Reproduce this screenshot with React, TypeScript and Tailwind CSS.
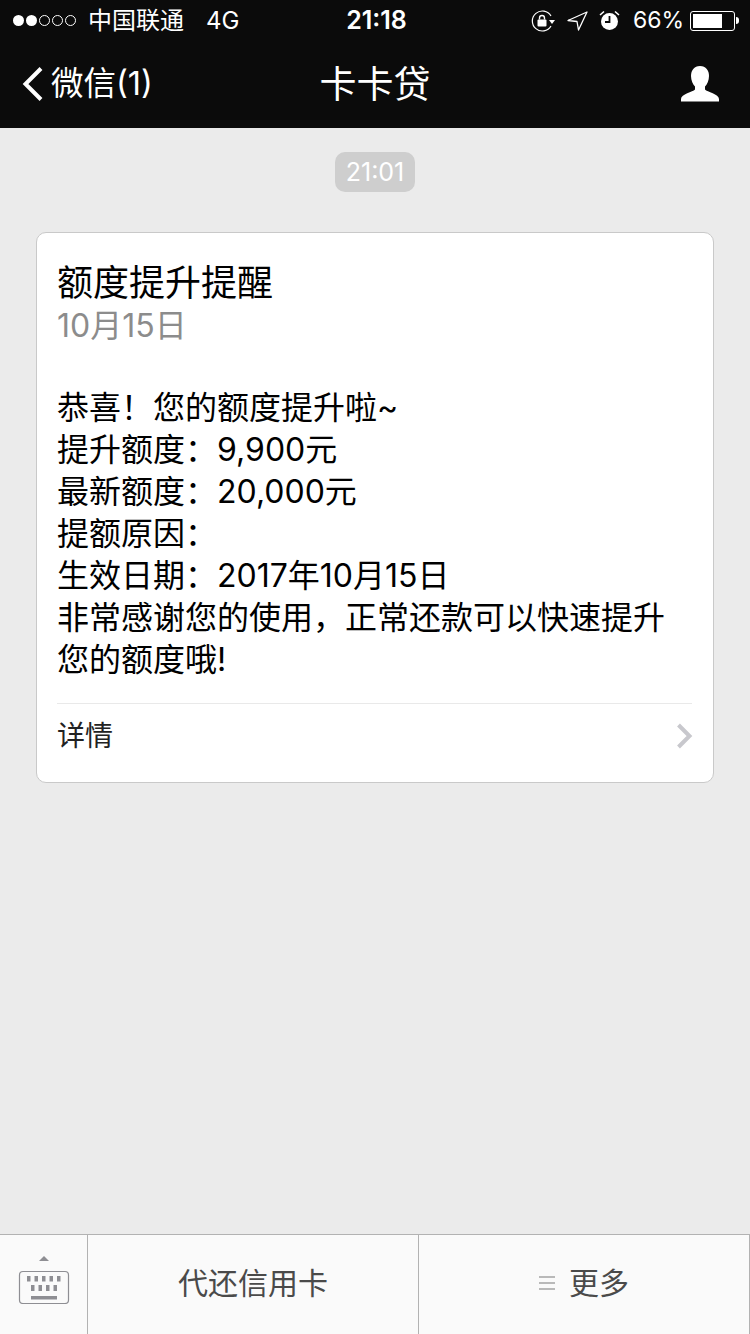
import React from "react";

const CJK = "font-['Inter','Noto_Sans_CJK_SC',sans-serif]";

const bodyLines = [
  "恭喜！您的额度提升啦~",
  "提升额度：9,900元",
  "最新额度：20,000元",
  "提额原因：",
  "生效日期：2017年10月15日",
  "非常感谢您的使用，正常还款可以快速提升",
  "您的额度哦!",
];

const StatusBar: React.FC = () => (
  <div className="flex h-10 items-center justify-between pl-[13px] pr-[8px] pt-[1px] text-[24px] text-white">
    <div className="flex items-center">
      <div className="flex gap-[2px]">
        {[true, true, false, false, false].map((on, i) => (
          <span
            key={i}
            className={on ? "size-[11px] rounded-full bg-white" : "size-[11px] rounded-full border border-white"}
          />
        ))}
      </div>
      <span className="ml-[12px] text-[24px] leading-none">中国联通</span>
      <span className="ml-[22px] text-[24px] leading-none">4G</span>
    </div>
    <span className="absolute left-[3px] right-0 text-center text-[25px] font-semibold leading-none">21:18</span>
    <div className="relative flex items-center">
      <svg width="25" height="22" viewBox="0 0 25 22" className="mr-[11px] ml-[2px]" fill="none">
        <path d="M20 6A10 10 0 1 0 20 16" stroke="#fff" strokeWidth="1.2" />
        <path d="M18 10h6l-3 4z" fill="#fff" />
        <rect x="6.500" y="9.500" width="9" height="7" rx="1" fill="#fff" />
        <path d="M8.500 9.500V8a2.500 2.500 0 0 1 5 0v1.500" stroke="#fff" strokeWidth="1.400" />
      </svg>
      <svg width="21" height="20" viewBox="0 0 21 20" className="mr-[11px]" fill="none">
        <path d="M20 1L1 9.500l9 1 1.500 8.500z" stroke="#fff" strokeWidth="1.300" strokeLinejoin="round" />
      </svg>
      <svg width="21" height="21" viewBox="0 0 21 21" className="mr-[13px]" fill="none">
        <circle cx="10.500" cy="11.500" r="8.500" fill="#fff" />
        <path d="M10.500 6v6H6" stroke="#0b0b0b" strokeWidth="1.800" />
        <path d="M1 5l4-3.500M20 5l-4-3.500" stroke="#fff" strokeWidth="1.600" />
      </svg>
      <span className="text-[23px] leading-none">66%</span>
      <div className="relative ml-[6px] flex h-[20px] w-[45px] items-center rounded-[3px] border border-white p-[2px]">
        <div className="h-full w-[29px] bg-white" />
      </div>
      <span className="ml-[1px] mr-[3px] h-[7px] w-[3px] rounded-r-full bg-white" />
    </div>
  </div>
);

const NavBar: React.FC = () => (
  <div className="relative flex h-[88px] items-center justify-between pl-[22px] pr-[31px] text-white">
    <div className="flex items-center">
      <svg width="22" height="36" viewBox="0 0 22 36" fill="none">
        <path d="M19 2.500L3.500 18 19 33.500" stroke="#fff" strokeWidth="4" />
      </svg>
      <span className="ml-[7px] text-[32.5px] leading-none">微信(1)</span>
    </div>
    <span className="absolute left-0 right-0 text-center text-[37px] leading-none">卡卡贷</span>
    <svg width="38" height="36" viewBox="0 0 38 36" fill="#fff">
      <path d="M19 0c6 0 9 4.500 9 10 0 4.500-2 8.500-4 10.500v3c2 2.500 14 4.500 14 9.500v2.500H0V33c0-5 12-7 14-9.500v-3C12 18.500 10 14.500 10 10 10 4.500 13 0 19 0z" />
    </svg>
  </div>
);

const MessageCard: React.FC = () => (
  <div className="mx-9 mt-10 rounded-[10px] border border-[#c9c9c9] bg-white pl-[20px] pr-[21px]">
    <div className="pt-[28px] text-[36px] leading-[44px] text-black">额度提升提醒</div>
    <div className="text-[32px] leading-[42px] text-[#8c8c8c]">10月15日</div>
    <div className="mt-[40px] pb-[22px] text-[32px] leading-[42px] text-black">
      {bodyLines.map(line => (
        <div key={line} className="whitespace-nowrap">{line}</div>
      ))}
    </div>
    <div className="flex h-[79px] items-center justify-between border-t border-[#e9e9e9] pb-[14px] text-[28px] text-[#222]">
      <span>详情</span>
      <svg width="17" height="26" viewBox="0 0 17 26" fill="none" className="mr-[-1px]">
        <path d="M2.500 2L13.500 13 2.500 24" stroke="#c8c8cd" strokeWidth="4" />
      </svg>
    </div>
  </div>
);

const BottomBar: React.FC = () => (
  <div className="mt-auto flex h-[100px] border-t border-[#b2b2b2] bg-[#fafafa] text-[30px] text-[#4a4a4a]">
    <div className="flex w-[88px] shrink-0 flex-col items-center justify-center border-r border-[#b2b2b2] pb-[11px]">
      <svg width="52" height="50" viewBox="0 0 52 50" fill="none">
        <path d="M21 7l5-5 5 5z" fill="#8e8e93" />
        <rect x="1.500" y="17.500" width="49" height="32" rx="3.500" stroke="#8e8e93" strokeWidth="1.200" />
        <path
          d="M9 22h3.500v5.500H9zM16.500 22H20v5.500h-3.500zM24 22h3.500v5.500H24zM31.500 22H35v5.500h-3.500zM39 22h3.500v5.500H39zM13 31h3.500v6H13zM20.500 31H24v6h-3.500zM28 31h3.500v6H28zM35.500 31H39v6h-3.500zM13 42h26v3.500H13z"
          fill="#8e8e93"
        />
      </svg>
    </div>
    <div className="flex w-[331px] shrink-0 items-center justify-center border-r border-[#b2b2b2] pb-[3px]">代还信用卡</div>
    <div className="flex flex-1 items-center justify-center border-r border-[#b2b2b2] pb-[3px]">
      <div className="mr-[14px] flex w-4 flex-col gap-[4px]">
        <span className="h-[2px] bg-[#b9b9b9]" />
        <span className="h-[2px] bg-[#b9b9b9]" />
        <span className="h-[2px] bg-[#b9b9b9]" />
      </div>
      <span>更多</span>
    </div>
  </div>
);

const App: React.FC = () => {
  return (
    <div className={`flex h-[1334px] w-[750px] flex-col overflow-hidden bg-[#ebebeb] ${CJK}`}>
      <div className="bg-[#0b0b0b]">
        <StatusBar />
        <NavBar />
      </div>
      <div className="mt-6 flex justify-center">
        <span className="flex h-10 w-20 items-center justify-center rounded-[10px] bg-[#cecece] pt-[1px] text-[25px] text-white">21:01</span>
      </div>
      <MessageCard />
      <BottomBar />
    </div>
  );
};

export default App;
